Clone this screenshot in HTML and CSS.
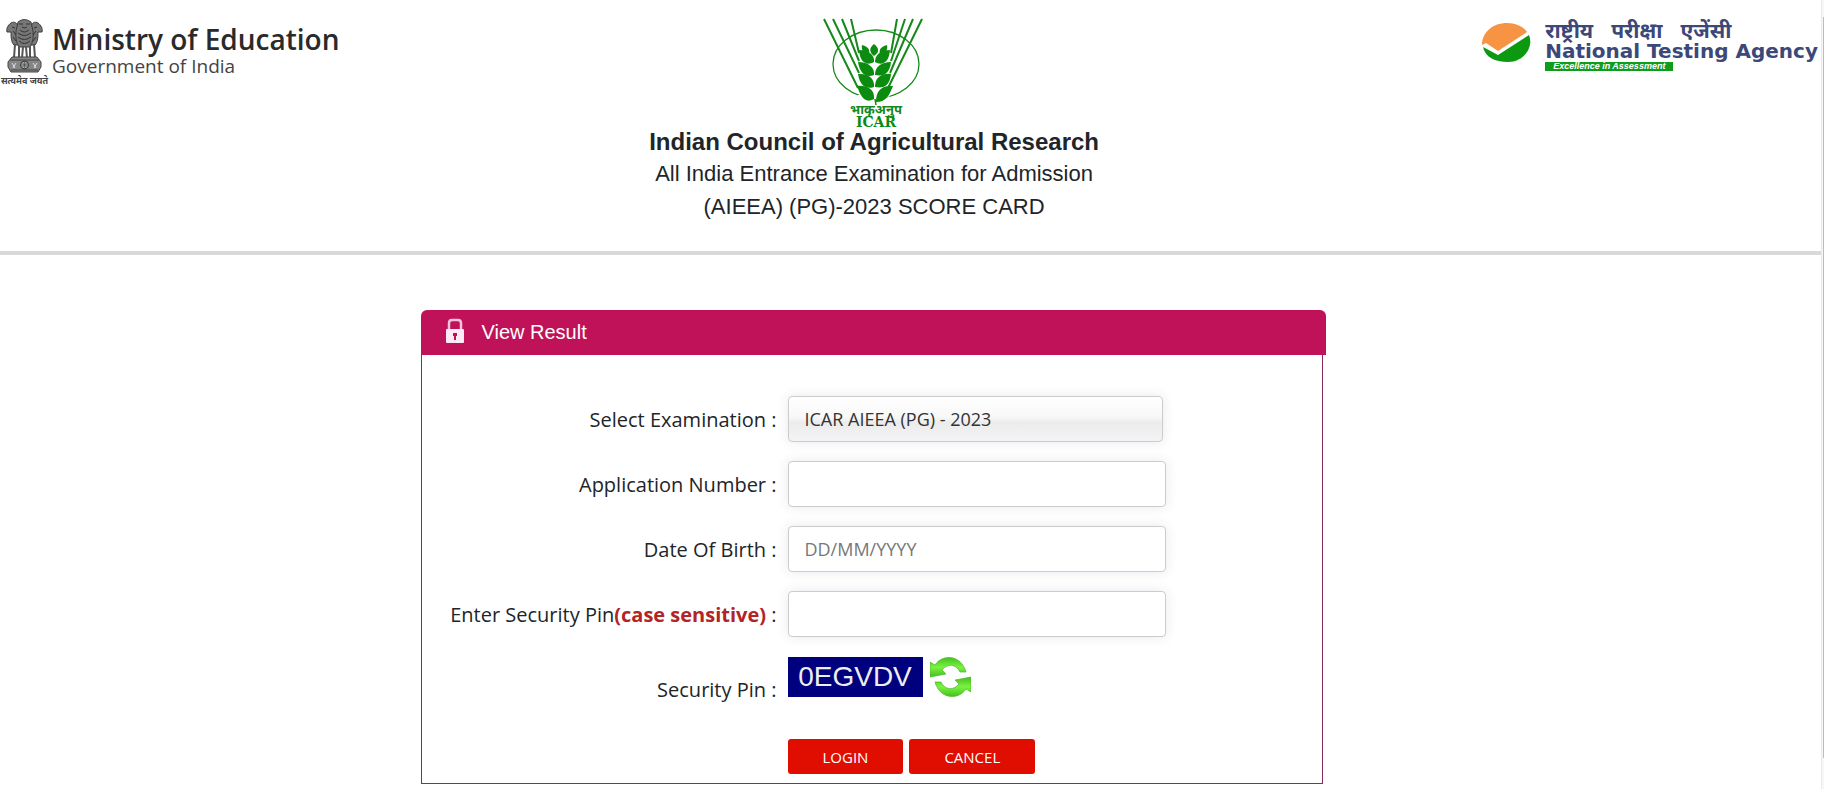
FILE: index.html
```
<!DOCTYPE html>
<html lang="en">
<head>
<meta charset="utf-8">
<meta name="viewport" content="width=device-width, initial-scale=1">
<title>ICAR AIEEA (PG) - 2023 Score Card</title>
<link rel="stylesheet" href="styles.css">
</head>
<body class="page">
<div class="content">
<header class="header">
  <div class="ministry">
    <div class="emblem">
      <svg class="emblem-art" viewBox="0 0 37 54" aria-hidden="true">
        <g fill="#777" stroke="#3d3d3d" stroke-width="1">
          <path d="M5 4C8 2 11 4 12 7L13 26 8 26C5 23 5 17 5 13L1 13C0 10 2 6 5 4Z"/>
          <path d="M32 4C29 2 26 4 25 7L24 26 29 26C32 23 32 17 32 13L36 13C37 10 35 6 32 4Z"/>
          <path d="M12 3Q18-2 25 3L27 12Q28 22 24 28L13 28Q9 22 10 12Z"/>
        </g>
        <g fill="none" stroke="#333" stroke-width="1">
          <path d="M13 5H17M20 5H24M16 8Q18 10 21 8M14 11Q18 15 23 11M12 14Q18 19 25 14M12 18Q18 23 25 18M13 22Q18 27 24 22M6 8L9 9M31 8L28 9M7 12L10 16M30 12L27 16M7 18L10 22M30 18L27 22"/>
        </g>
        <g fill="none" stroke="#555" stroke-width="2">
          <path d="M9 25L8 39M13 27V39M17 28L16 39M20 28L21 39M24 27V39M28 25L29 39"/>
        </g>
        <path d="M6 38H31L35 43V48L32 53H5L2 48V43Z" fill="#858585" stroke="#444"/>
        <path d="M4 41H33M5 51H32" stroke="#444"/>
        <circle cx="18.500" cy="46" r="4" fill="#aaa" stroke="#333"/>
        <path d="M18.500 42V50M14.500 46H22.500M15.700 43.200L21.300 48.800M21.300 43.200L15.700 48.800" stroke="#444" stroke-width=".6"/>
        <path d="M6 44L9 49M10 44L7 49M27 44L30 49M31 44L28 49" stroke="#ddd"/>
      </svg>
      <span class="motto" lang="hi">सत्यमेव जयते</span>
    </div>
    <div class="ministry-text">
      <strong class="ministry-name">Ministry of Education</strong>
      <span class="ministry-gov">Government of India</span>
    </div>
  </div>

  <div class="council">
    <svg class="icar" viewBox="0 0 100 108" role="img" aria-label="ICAR">
      <g fill="none" stroke="#16891b">
        <ellipse cx="52" cy="45" rx="43" ry="34" stroke-width="1.300"/>
        <path d="M0 0L34 69M9 0L35 54M18 0L35 42M27 0L35 34M98 0L64 69M89 0L66 54M81 0L67 42M73 0L67 34" stroke-width="2"/>
      </g>
      <path d="M33 76L67 76 55 84 43 84Z" fill="#fff"/>
      <g fill="#0b8c10">
        <path d="M50 25C55 29 56 33 50 37 45 33 45 29 50 25ZM38 26C45 28 46 31 45 35 39 34 37 31 38 26ZM63 26C56 28 55 31 56 35 62 34 64 31 63 26Z"/>
        <path d="M35 31C45 31 51 36 50 43 43 47 36 44 35 31ZM66 31C56 31 51 36 51 43 58 47 65 44 66 31Z"/>
        <path d="M34 43C45 43 51 49 50 56 42 59 36 55 34 43ZM67 43C57 43 51 48 51 56 60 58 66 54 67 43Z"/>
        <path d="M34 55C45 54 51 60 50 68 41 71 36 66 34 55ZM67 55C57 54 51 59 51 68 60 70 66 66 67 55Z"/>
        <path d="M33 67C44 66 51 71 50 80 41 85 37 78 33 67ZM69 67C57 66 52 72 52 83 62 83 65 77 69 67Z"/>
      </g>
      <path d="M51 80L52 86" stroke="#0b8c10" stroke-width="1.500"/>
      <text class="icar-hindi" x="52" y="95" text-anchor="middle" lang="hi">भाकृअनुप</text>
      <text class="icar-latin" x="52" y="108" text-anchor="middle">ICAR</text>
    </svg>
    <h1 class="council-name">Indian Council of Agricultural Research</h1>
    <p class="council-line">All India Entrance Examination for Admission</p>
    <p class="council-line">(AIEEA) (PG)-2023 SCORE CARD</p>
  </div>

  <div class="agency">
    <svg class="agency-mark" viewBox="0 0 50 40" aria-hidden="true">
      <path d="M0 22C0 9 11 0 25 0 34 0 42 4 45 9L16 28 4 20Z" fill="#f79443"/>
      <path d="M1 24L16 32 47 12C52 24 42 39 26 39 13 39 3 34 1 24Z" fill="#0b990f"/>
    </svg>
    <div class="agency-text">
      <span class="agency-hindi" lang="hi"><span>राष्ट्रीय</span> <span>परीक्षा</span> <span>एजेंसी</span></span>
      <strong class="agency-name">National Testing Agency</strong>
      <span class="agency-tag">Excellence in Assessment</span>
    </div>
  </div>
</header>

<main class="main">
  <section class="card">
    <div class="card-head">
      <svg class="lock" viewBox="0 0 18 25" aria-hidden="true">
        <path d="M3 13V5Q3 2 6 2H12Q15 2 15 5V13" fill="none" stroke="#f6c3dc" stroke-width="2.500"/>
        <rect x="0" y="11" width="18" height="14" rx="1" fill="#fdeaf4"/>
        <path d="M7 15H11V18H10V22H8V18H7Z" fill="#bd1457"/>
      </svg>
      <h2 class="card-title">View Result</h2>
    </div>
    <form class="form">
      <div class="row">
        <label class="label" for="exam">Select Examination :</label>
        <select class="field field-select" id="exam"><option>ICAR AIEEA (PG) - 2023</option></select>
      </div>
      <div class="row">
        <label class="label" for="appno">Application Number :</label>
        <input class="field" id="appno" type="text">
      </div>
      <div class="row">
        <label class="label" for="dob">Date Of Birth :</label>
        <input class="field" id="dob" type="text" placeholder="DD/MM/YYYY">
      </div>
      <div class="row">
        <label class="label" for="pin">Enter Security Pin<b class="case">(case sensitive)</b> :</label>
        <input class="field" id="pin" type="text">
      </div>
      <div class="row row-captcha">
        <span class="label">Security Pin :</span>
        <div class="captcha">
          <span class="captcha-code">0EGVDV</span>
          <button class="refresh" type="button" aria-label="Refresh security pin">
            <svg class="refresh-art" viewBox="0 0 41 40" aria-hidden="true">
              <defs><linearGradient id="leaf" x1="0" y1="0" x2="0" y2="1"><stop offset="0" stop-color="#3fc21e"/><stop offset=".5" stop-color="#7cf23f"/><stop offset="1" stop-color="#43be20"/></linearGradient></defs>
              <path id="arrow" d="M0 5L5 8C12-3 31-3 36 15L30 15C26 7 18 6 12 13L16 17 0 20Z" fill="url(#leaf)" stroke="#4db82f" stroke-width=".7"/>
              <use href="#arrow" transform="rotate(180 20.500 20)"/>
            </svg>
          </button>
        </div>
      </div>
      <div class="row row-actions">
        <div class="actions">
          <button class="btn" type="submit">LOGIN</button>
          <button class="btn" type="reset">CANCEL</button>
        </div>
      </div>
    </form>
  </section>
</main>
</div>
<div class="rail" aria-hidden="true"><div class="rail-thumb"></div></div>
</body>
</html>
```
FILE: styles.css
```
* { box-sizing: border-box; }

.page {
  margin: 0;
  min-height: 100vh;
  display: grid;
  grid-template-columns: 1fr 3px;
  background: #fff;
  color: #212529;
  font-family: "Liberation Sans", sans-serif;
}

/* Header */
.header {
  display: grid;
  grid-template-columns: 25% 46% 29%;
  align-items: start;
  padding-bottom: 28px;
  border-bottom: 4px solid #d9d9d9;
}
.ministry { display: flex; gap: 3px; padding-top: 19px; }
.emblem { display: flex; flex-direction: column; align-items: center; gap: 3px; width: 49px; }
.emblem-art { width: 37px; height: 54px; }
.motto { font: bold 9px/10px "Noto Sans", sans-serif; white-space: nowrap; color: #444; }
.ministry-text { display: flex; flex-direction: column; padding-top: 4px; white-space: nowrap; }
.ministry-name { font: 600 28px/33px "Open Sans", sans-serif; color: #2a2a2a; }
.ministry-gov { font: 400 19px/20px "Open Sans", sans-serif; color: #444; }

.council { display: flex; flex-direction: column; align-items: center; padding-top: 19px; text-align: center; }
.icar { width: 100px; height: 108px; overflow: visible; }
.icar-hindi { font: bold 13px "Noto Sans", sans-serif; fill: #16891b; }
.icar-latin { font: bold 14px "DejaVu Serif", serif; fill: #0b8c10; }
.council-name { margin: 0; font-size: 24px; line-height: 30px; }
.council-line { margin: 0; font-size: 22px; line-height: 33px; }

.agency { display: flex; justify-content: flex-end; gap: 13px; padding: 20px 3px 0 0; }
.agency-mark { width: 50px; height: 40px; margin-top: 3px; }
.agency-text { display: flex; flex-direction: column; align-items: flex-start; white-space: nowrap; color: #3c4878; }
.agency-hindi { display: flex; gap: 18px; font: bold 21px/20px "Noto Sans", sans-serif; }
.agency-name { font: bold 20px/22px "DejaVu Sans", sans-serif; }
.agency-tag { padding: 0 8px; background: #109c1c; color: #fff; font: italic bold 9px/9px "Liberation Sans", sans-serif; }

/* Result form */
.main { display: flex; justify-content: center; padding: 55px 75px 5px 0; }
.card { width: 50%; min-width: 905px; }
.card-head {
  display: flex;
  align-items: center;
  gap: 18px;
  height: 45px;
  padding: 0 25px;
  border-radius: 6px 6px 0 0;
  background: #bf1258;
  color: #fff;
}
.lock { width: 18px; height: 25px; margin-bottom: 4px; }
.card-title { margin: 0 0 2px; font-size: 20px; font-weight: 400; line-height: 24px; }
.form {
  display: flex;
  flex-direction: column;
  gap: 19px;
  margin-right: 3px;
  padding: 41px 0 9px;
  border: 1px solid #8c2b5e;
  border-top: 0;
}
.row { display: grid; grid-template-columns: 355px 378px; column-gap: 11px; align-items: center; font-family: "Open Sans", sans-serif; }
.label { padding-top: 2px; font-size: 20px; line-height: 28px; text-align: right; white-space: nowrap; }
.case { color: #b32424; }
.field {
  width: 100%;
  height: 46px;
  padding: 0 16px;
  border: 1px solid #ccc;
  border-radius: 4px;
  background: #fff;
  box-shadow: 0 0 12px rgba(70, 50, 110, 0.12);
  color: #333;
  font: 400 18px "Open Sans", sans-serif;
}
.field::placeholder { color: #777; opacity: 1; }
.field-select {
  width: calc(100% - 3px);
  appearance: none;
  background: linear-gradient(#fff, #f8f8f8 45%, #ececec 58%, #f3f3f5);
}
.row-captcha { align-items: end; padding-top: 1px; }
.row-captcha .label { line-height: 24px; }
.captcha { display: flex; align-items: flex-start; gap: 7px; padding-bottom: 5px; }
.captcha-code { width: 135px; height: 40px; background: #00007f; color: #eee; font: 28px/40px "Liberation Sans", sans-serif; text-align: center; }
.refresh { width: 41px; height: 40px; padding: 0; border: 0; background: none; }
.refresh-art { display: block; width: 41px; height: 40px; }
.row-actions { padding-top: 18px; }
.actions { grid-column: 2; display: flex; gap: 6px; }
.btn { height: 35px; padding: 0 35px; border: 0; border-radius: 3px; background: #e00e00; color: #fff; font: 15px "Open Sans", sans-serif; }

/* Scroll rail */
.rail { padding-top: 17px; border-left: 1px solid #ece8ee; background: #f7f7f7; }
.rail-thumb { height: 96%; margin-left: 1px; background: #bcbcbc; }
```
